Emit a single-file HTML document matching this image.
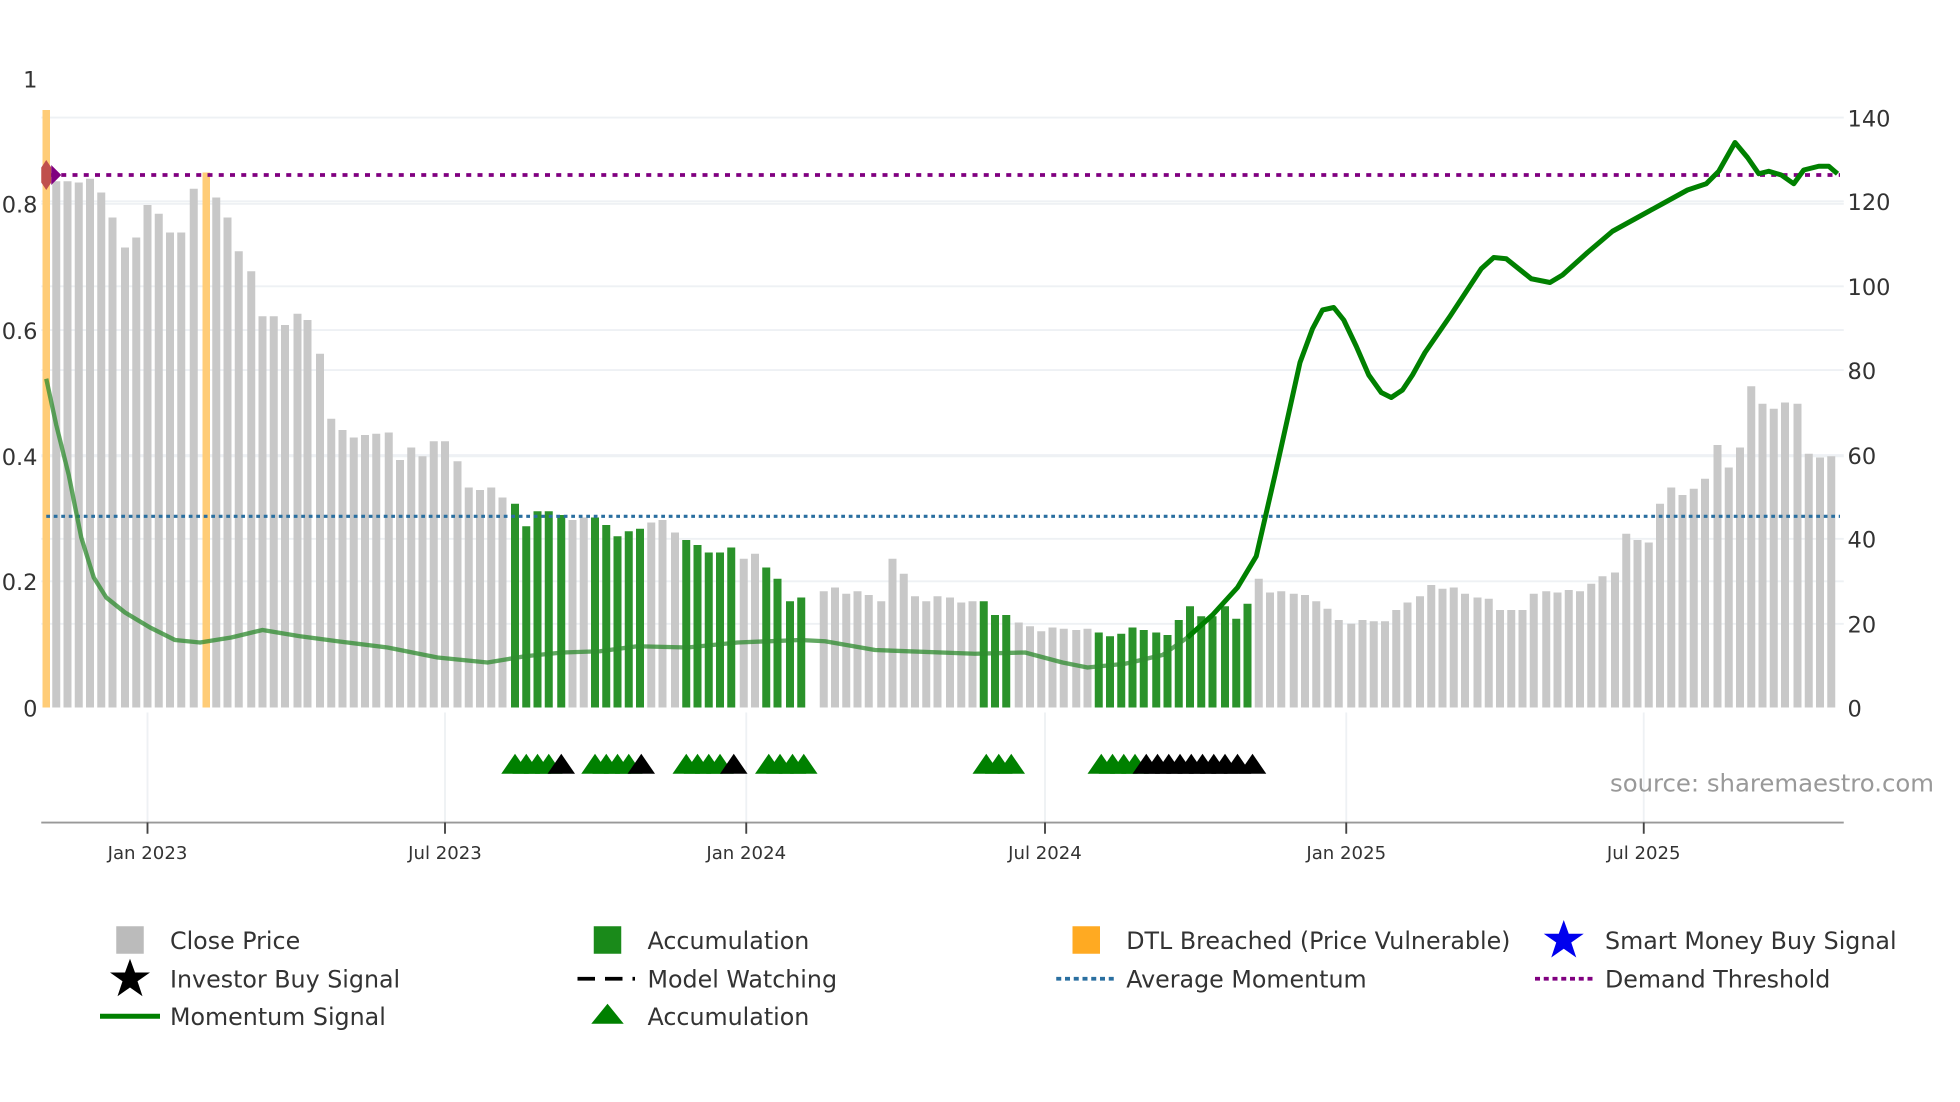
<!DOCTYPE html>
<html><head><meta charset="utf-8"><style>
html,body{margin:0;padding:0;background:#fff;width:1960px;height:1102px;overflow:hidden}
svg{display:block}
text{font-family:"DejaVu Sans","Liberation Sans",sans-serif;fill:#333}
</style></head><body>
<svg id="s" width="1960" height="1102" viewBox="0 0 1568 881.6" xmlns="http://www.w3.org/2000/svg">
<g stroke="#eef1f4" stroke-width="1.5">
<line x1="33" x2="1475" y1="94" y2="94"/><line x1="33" x2="1475" y1="161" y2="161"/><line x1="33" x2="1475" y1="229" y2="229"/><line x1="33" x2="1475" y1="296" y2="296"/><line x1="33" x2="1475" y1="364" y2="364"/><line x1="33" x2="1475" y1="431" y2="431"/><line x1="33" x2="1475" y1="499" y2="499"/>
<line x1="33" x2="1475" y1="163" y2="163"/><line x1="33" x2="1475" y1="264" y2="264"/><line x1="33" x2="1475" y1="365" y2="365"/><line x1="33" x2="1475" y1="465" y2="465"/>
<line x1="118" x2="118" y1="570" y2="658"/><line x1="356" x2="356" y1="570" y2="658"/><line x1="597" x2="597" y1="570" y2="658"/><line x1="836" x2="836" y1="570" y2="658"/><line x1="1077" x2="1077" y1="570" y2="658"/><line x1="1315" x2="1315" y1="570" y2="658"/>
</g>
<g id="bars"></g>
<rect x="34" y="88" width="6" height="478" fill="#ffcc77"/>
<rect x="162" y="138" width="6" height="428" fill="#ffcc77"/>
<line x1="37" x2="1472" y1="413" y2="413" stroke="#2a6fa0" stroke-width="2.5" stroke-dasharray="3,3"/>
<line x1="40" x2="1472" y1="140" y2="140" stroke="#800080" stroke-width="3" stroke-dasharray="4,5"/>
<polygon points="37,128 41,134 41,146 37,152 33,146 33,134" fill="#c0504d"/>
<polygon points="41,132 49,140 41,148" fill="#800080"/>
<polyline id="m1" fill="none" stroke="#2e8b2e" stroke-opacity="0.75" stroke-width="3.5" stroke-linejoin="round"/>
<polyline id="m2" fill="none" stroke="#008000" stroke-width="4" stroke-linejoin="round"/>
<g id="tri"></g>
<line x1="33" x2="1475" y1="658" y2="658" stroke="#999" stroke-width="1.5"/>
<g stroke="#444" stroke-width="1.5"><line x1="118" x2="118" y1="658" y2="667"/><line x1="356" x2="356" y1="658" y2="667"/><line x1="597" x2="597" y1="658" y2="667"/><line x1="836" x2="836" y1="658" y2="667"/><line x1="1077" x2="1077" y1="658" y2="667"/><line x1="1315" x2="1315" y1="658" y2="667"/></g>
<g font-size="14.5" text-anchor="middle"><text x="118" y="687">Jan 2023</text><text x="356" y="687">Jul 2023</text><text x="597" y="687">Jan 2024</text><text x="836" y="687">Jul 2024</text><text x="1077" y="687">Jan 2025</text><text x="1315" y="687">Jul 2025</text></g>
<g font-size="18" text-anchor="end"><text x="30" y="70">1</text><text x="30" y="170">0.8</text><text x="30" y="271">0.6</text><text x="30" y="372">0.4</text><text x="30" y="472">0.2</text><text x="30" y="573">0</text></g>
<g font-size="18"><text x="1478" y="101">140</text><text x="1478" y="168">120</text><text x="1478" y="236">100</text><text x="1478" y="303">80</text><text x="1478" y="371">60</text><text x="1478" y="438">40</text><text x="1478" y="506">20</text><text x="1478" y="573">0</text></g>
<text x="1288" y="633" font-size="19.5" style="fill:#999">source: sharemaestro.com</text>
<g font-size="19">
<rect x="93" y="741" width="22" height="22" fill="#bbb"/><text x="136" y="759">Close Price</text>
<rect x="475" y="741" width="22" height="22" fill="#1a8a1a"/><text x="518" y="759">Accumulation</text>
<rect x="858" y="741" width="22" height="22" fill="#ffaa22"/><text x="901" y="759">DTL Breached (Price Vulnerable)</text>
<polygon points="1251,736 1255,747 1267,747 1257,754 1261,766 1251,759 1241,766 1245,754 1235,747 1247,747" fill="#0000ee"/><text x="1284" y="759">Smart Money Buy Signal</text>
<polygon points="104,767 108,778 120,778 110,785 114,797 104,790 94,797 98,785 88,778 100,778" fill="#000"/><text x="136" y="790">Investor Buy Signal</text>
<line x1="462" x2="508" y1="783" y2="783" stroke="#000" stroke-width="3" stroke-dasharray="14,8"/><text x="518" y="790">Model Watching</text>
<line x1="845" x2="891" y1="783" y2="783" stroke="#2a6fa0" stroke-width="3" stroke-dasharray="4,3"/><text x="901" y="790">Average Momentum</text>
<line x1="1228" x2="1274" y1="783" y2="783" stroke="#800080" stroke-width="3" stroke-dasharray="4,3"/><text x="1284" y="790">Demand Threshold</text>
<line x1="80" x2="128" y1="813" y2="813" stroke="#008000" stroke-width="4"/><text x="136" y="820">Momentum Signal</text>
<polygon points="486,803 499,819 473,819" fill="#008000"/><text x="518" y="820">Accumulation</text>
</g>
</svg>
<script>
var NS="http://www.w3.org/2000/svg";
var tops=[[45,145],[54,145],[63,146],[72,143],[81,154],[90,174],[100,198],[109,190],[118,164],[127,171],[136,186],[145,186],[155,151],[173,158],[182,174],[191,201],[201,217],[210,253],[219,253],[228,260],[238,251],[246,256],[256,283],[265,335],[274,344],[283,350],[292,348],[301,347],[311,346],[320,368],[329,358],[338,365],[347,353],[356,353],[366,369],[375,390],[384,392],[393,390],[402,398],[412,403,1],[421,421,1],[430,409,1],[439,409,1],[449,412,1],[458,416],[467,414],[476,414,1],[485,420,1],[494,429,1],[503,425,1],[512,423,1],[521,418],[530,416],[540,426],[549,432,1],[558,436,1],[567,442,1],[576,442,1],[585,438,1],[595,447],[604,443],[613,454,1],[622,463,1],[632,481,1],[641,478,1],[659,473],[668,470],[677,475],[686,473],[695,476],[705,481],[714,447],[723,459],[732,477],[741,481],[750,477],[760,478],[769,482],[778,481],[787,481,1],[796,492,1],[805,492,1],[815,498],[824,501],[833,505],[842,502],[851,503],[861,504],[870,503],[879,506,1],[888,509,1],[897,507,1],[906,502,1],[915,504,1],[925,506,1],[934,508,1],[943,496,1],[952,485,1],[961,493,1],[970,493,1],[980,485,1],[989,495,1],[998,483,1],[1007,463],[1016,474],[1025,473],[1035,475],[1044,476],[1053,481],[1062,487],[1071,496],[1081,499],[1090,496],[1099,497],[1108,497],[1117,488],[1126,482],[1136,477],[1145,468],[1154,471],[1163,470],[1172,475],[1182,478],[1191,479],[1200,488],[1209,488],[1218,488],[1227,475],[1237,473],[1246,474],[1255,472],[1264,473],[1273,467],[1282,461],[1292,458],[1301,427],[1310,432],[1319,434],[1328,403],[1337,390],[1346,396],[1355,391],[1364,383],[1374,356],[1383,374],[1392,358],[1401,309],[1410,323],[1419,327],[1428,322],[1438,323],[1447,363],[1456,366],[1465,365]];
var g=document.getElementById("bars");
tops.forEach(function(t){var r=document.createElementNS(NS,"rect");r.setAttribute("x",t[0]-3.2);r.setAttribute("y",t[1]);r.setAttribute("width",6.4);r.setAttribute("height",566-t[1]);r.setAttribute("fill",t[2]?"#2a922a":"#c8c8c8");g.appendChild(r);});
var m=[[37,303],[45,340],[55,380],[65,430],[75,462],[85,478],[100,490],[120,502],[140,512],[160,514],[185,510],[210,504],[240,509],[270,513],[310,518],[350,526],[390,530],[420,525],[450,522],[480,521],[510,517],[550,518],[590,514],[640,512],[660,513],[700,520],[780,523],[820,522],[850,530],[870,534],[900,531],[930,524],[950,510]];
var m2=[[950,510],[970,492],[990,470],[1005,445],[1020,380],[1040,290],[1050,263],[1058,248],[1067,246],[1075,256],[1085,277],[1095,300],[1105,314],[1113,318],[1122,312],[1130,300],[1140,282],[1160,253],[1185,215],[1195,206],[1205,207],[1215,215],[1225,223],[1240,226],[1250,220],[1270,202],[1290,185],[1310,174],[1330,163],[1350,152],[1365,147],[1375,137],[1388,114],[1398,126],[1407,139],[1415,137],[1425,140],[1435,147],[1443,136],[1455,133],[1463,133],[1470,139]];
document.getElementById("m1").setAttribute("points",m.join(" "));
document.getElementById("m2").setAttribute("points",m2.join(" "));
var tg=document.getElementById("tri");
function tri(x,c){var p=document.createElementNS(NS,"polygon");p.setAttribute("points",(x-11)+",619 "+x+",603 "+(x+11)+",619");p.setAttribute("fill",c);tg.appendChild(p);}
[[412,"g"],[421,"g"],[430,"g"],[439,"g"],[449,"k"],[476,"g"],[485,"g"],[494,"g"],[503,"g"],[513,"k"],[549,"g"],[558,"g"],[567,"g"],[576,"g"],[587,"k"],[615,"g"],[624,"g"],[634,"g"],[643,"g"],[789,"g"],[799,"g"],[809,"g"],[881,"g"],[890,"g"],[899,"g"],[908,"g"],[917,"k"],[926,"k"],[935,"k"],[944,"k"],[953,"k"],[962,"k"],[971,"k"],[980,"k"],[990,"k"],[1002,"k"]].forEach(function(t){tri(t[0],t[1]=="g"?"#008000":"#000");});
</script>
</body></html>
